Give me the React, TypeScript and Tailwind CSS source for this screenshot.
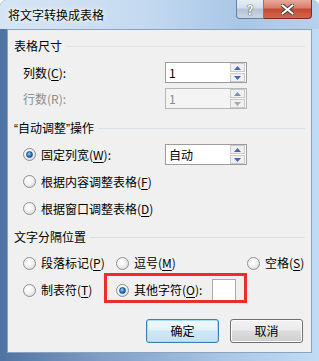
import React from "react";

const F = "font-['Microsoft_YaHei','Noto_Sans_CJK_SC',sans-serif]";

function U({ c }: { c: string }) {
  return <span className="underline underline-offset-[2px]">{c}</span>;
}

function Radio({ checked }: { checked?: boolean }) {
  return (
    <span className="relative inline-flex w-[13px] h-[13px] shrink-0 items-center justify-center rounded-full border border-[#8f8f8f] bg-[radial-gradient(circle_at_40%_35%,#ffffff_0%,#f2f2f2_45%,#cfcfcf_100%)]">
      {checked && (
        <span className="w-[7px] h-[7px] rounded-full bg-[radial-gradient(circle_at_40%_35%,#9fd3ff_0%,#2f86d4_45%,#0d3f7a_100%)] border border-[#1c4f86]" />
      )}
    </span>
  );
}

function Spin({ value, disabled }: { value: string; disabled?: boolean }) {
  return (
    <div
      className={`flex h-[21px] w-[82px] items-center border ${
        disabled ? "border-[#b5b5b5] bg-[#f4f4f4]" : "border-[#9c9c9c] bg-white"
      }`}
    >
      <span
        className={`flex-1 pl-[3px] text-[12px] leading-[19px] ${
          disabled ? "text-[#8a8a8a]" : "text-black"
        }`}
      >
        {value}
      </span>
      <div className="flex flex-col gap-[1px] pr-[1px]">
        <div className="flex h-[9px] w-[15px] items-center justify-center border border-[#c9c9c9] bg-[#f0f0f0]">
          <svg width="7" height="4" viewBox="0 0 7 4">
            <path d="M0 4 L3.5 0 L7 4 Z" fill={disabled ? "#7a8fb8" : "#4a68ad"} />
          </svg>
        </div>
        <div className="flex h-[9px] w-[15px] items-center justify-center border border-[#c9c9c9] bg-[#f0f0f0]">
          <svg width="7" height="4" viewBox="0 0 7 4">
            <path d="M0 0 L3.5 4 L7 0 Z" fill={disabled ? "#a7a7a7" : "#4a68ad"} />
          </svg>
        </div>
      </div>
    </div>
  );
}

function Header({ children }: { children: React.ReactNode }) {
  return (
    <div className="flex h-[16px] items-center pr-[6px]">
      <span className="text-[12px] leading-[16px] text-black whitespace-nowrap">{children}</span>
      <div className="ml-[4px] h-px flex-1 bg-[#d9e1e8]" />
    </div>
  );
}

const Q = "font-['Liberation_Sans',sans-serif]";

export default function App() {
  return (
    <div
      className={`${F} relative w-[319px] h-[361px] overflow-hidden rounded-t-[6px] bg-[linear-gradient(to_right,#4f73a3_0%,#7d9cc4_30%,#a9c6e8_70%,#c2dcf5_100%)]`}
    >
      {/* frame top (title bar) */}
      <div className="flex h-[29px] items-start bg-[linear-gradient(to_right,#d6e5f4_0%,#c5daf0_45%,#a8c6e6_75%,#b7d1ec_100%)]">
        <span className="ml-[8px] mt-[6px] text-[12px] leading-[18px] text-black [text-shadow:0_0_6px_#ffffff,0_0_3px_#ffffff]">
          将文字转换成表格
        </span>
        <div className="flex-1" />
        <div className="mr-[7px] flex h-[19px]">
          <div className="flex w-[28px] items-center justify-center rounded-bl-[4px] border border-t-0 border-[#6d7f97] bg-[linear-gradient(to_bottom,#e8eef5_0%,#d3dde9_45%,#b5c4d6_50%,#c9d6e4_100%)]">
            <span className="text-[13px] font-bold leading-none text-white [text-shadow:0_0_1px_#333,0_0_1px_#333]">?</span>
          </div>
          <div className="flex w-[48px] items-center justify-center rounded-br-[4px] border border-l-0 border-t-0 border-[#7d2a20] bg-[linear-gradient(to_bottom,#e9a99b_0%,#d67b68_45%,#c24a33_50%,#d8634a_100%)]">
            <svg width="13" height="11" viewBox="0 0 13 11">
              <path
                d="M1.5 1.5 L11.5 9.5 M11.5 1.5 L1.5 9.5"
                stroke="#3d3d3d"
                strokeWidth="4"
                strokeLinecap="round"
              />
              <path
                d="M1.5 1.5 L11.5 9.5 M11.5 1.5 L1.5 9.5"
                stroke="#ffffff"
                strokeWidth="2.2"
                strokeLinecap="round"
              />
            </svg>
          </div>
        </div>
      </div>

      {/* content */}
      <div className="relative mx-[7px] h-[324px] border border-[#8da2bd] bg-[#f0f0f0] pl-[6px] pt-[8px] text-[12px] text-black">
        <Header>表格尺寸</Header>

        <div className="mt-[8px] flex h-[21px] items-center pl-[9px]">
          <span className="w-[142px]">
            列数(<U c="C" />):
          </span>
          <Spin value="1" />
        </div>

        <div className="mt-[5px] flex h-[21px] items-center pl-[9px]">
          <span className="w-[142px] text-[#8d8d8d]">行数(R):</span>
          <Spin value="1" disabled />
        </div>

        <div className="mt-[11px]">
          <Header>
            <span className={Q}>“</span>自动调整<span className={Q}>”</span>操作
          </Header>
        </div>

        <div className="mt-[8px] flex h-[21px] items-center pl-[9px]">
          <div className="flex w-[142px] items-center gap-[5px]">
            <Radio checked />
            <span>
              固定列宽(<U c="W" />):
            </span>
          </div>
          <Spin value="自动" />
        </div>

        <div className="mt-[6px] flex h-[21px] items-center gap-[5px] pl-[9px]">
          <Radio />
          <span>
            根据内容调整表格(<U c="F" />)
          </span>
        </div>

        <div className="mt-[6px] flex h-[21px] items-center gap-[5px] pl-[9px]">
          <Radio />
          <span>
            根据窗口调整表格(<U c="D" />)
          </span>
        </div>

        <div className="mt-[10px]">
          <Header>文字分隔位置</Header>
        </div>

        <div className="mt-[8px] flex h-[20px] items-center pl-[9px]">
          <div className="flex w-[93px] items-center gap-[5px]">
            <Radio />
            <span>
              段落标记(<U c="P" />)
            </span>
          </div>
          <div className="flex w-[131px] items-center gap-[5px]">
            <Radio />
            <span>
              逗号(<U c="M" />)
            </span>
          </div>
          <div className="flex items-center gap-[5px]">
            <Radio />
            <span>
              空格(<U c="S" />)
            </span>
          </div>
        </div>

        <div className="mt-[7px] flex h-[20px] items-center pl-[9px]">
          <div className="flex w-[93px] items-center gap-[5px]">
            <Radio />
            <span>
              制表符(<U c="T" />)
            </span>
          </div>
          <div className="flex items-center gap-[5px]">
            <Radio checked />
            <span>
              其他字符(<U c="O" />):
            </span>
            <div className="ml-[5px] h-[22px] w-[24px] border border-[#a9a9a9] bg-white" />
          </div>
        </div>

        <div className="mt-[19px] flex justify-end gap-[11px] pr-[8px]">
          <button className="h-[24px] w-[73px] rounded-[3px] border border-[#3c7fb1] bg-[linear-gradient(to_bottom,#f2f9fd_0%,#e3f2fb_45%,#d0e8f7_50%,#c2e1f5_100%)] text-[12px] text-black shadow-[inset_0_0_0_1px_#a5dcf7]">
            确定
          </button>
          <button className="h-[24px] w-[73px] rounded-[3px] border border-[#707070] bg-[linear-gradient(to_bottom,#f2f2f2_0%,#ebebeb_45%,#dddddd_50%,#cfcfcf_100%)] text-[12px] text-black shadow-[inset_0_0_0_1px_#fcfcfc]">
            取消
          </button>
        </div>

        {/* red annotation box */}
        <div className="pointer-events-none absolute left-[96px] top-[243px] h-[30px] w-[143px] border-[3px] border-[#ec2d2d]" />
      </div>
    </div>
  );
}
